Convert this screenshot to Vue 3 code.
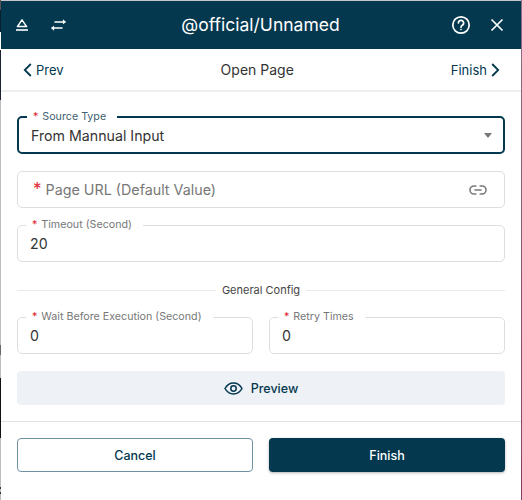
<template>
  <div class="frame">
    <div class="edge-left"></div>
    <div class="panel">
      <header class="topbar">
        <div class="topbar-side">
          <svg class="icon-eject" width="14" height="14" viewBox="0 0 14 14" fill="none" stroke="#fff">
            <path d="M7 1.800 11.600 8.600H2.400Z" stroke-width="1.500" stroke-linejoin="round" />
            <path d="M1 12H13" stroke-width="1.600" />
          </svg>
          <svg class="icon-swap" width="17" height="14" viewBox="0 0 18 14" fill="#fff">
            <path d="M5 4.200h9V2l3.400 2.900L14 7.400V5.600H5z" transform="translate(-.3 -1.100)" />
            <path d="M13 9.800H4V12L.6 9.100 4 6.600v1.800h9z" transform="translate(.3 1.100)" />
          </svg>
        </div>
        <h1 class="title">@official/Unnamed</h1>
        <div class="topbar-side right">
          <svg width="20" height="20" viewBox="0 0 20 20" fill="none" stroke="#fff" stroke-width="1.700">
            <circle cx="10" cy="10" r="8.200" />
            <path d="M7.400 8a2.600 2.600 0 1 1 3.900 2.200c-.9.500-1.300 1-1.300 2" stroke-linecap="round" />
            <circle cx="10" cy="14.500" r=".6" fill="#fff" stroke-width=".6" />
          </svg>
          <svg width="14" height="14" viewBox="0 0 14 14" stroke="#fff" stroke-width="1.700">
            <path d="M1.500 1.500 12.500 12.500M12.500 1.500 1.500 12.500" />
          </svg>
        </div>
      </header>

      <nav class="stepbar">
        <a class="step">
          <svg width="10" height="14" viewBox="0 0 10 14" fill="none" stroke="#03384f" stroke-width="1.800">
            <path d="M7.800 1 1.800 7l6 6" />
          </svg>
          Prev
        </a>
        <span class="step-title">Open Page</span>
        <a class="step">
          Finish
          <svg width="10" height="14" viewBox="0 0 10 14" fill="none" stroke="#03384f" stroke-width="1.800">
            <path d="M2.200 1l6 6-6 6" />
          </svg>
        </a>
      </nav>

      <main class="form">
        <fieldset class="field active">
          <legend><i>*</i>Source Type</legend>
          <div class="value">
            <span>From Mannual Input</span>
            <span class="caret"></span>
          </div>
        </fieldset>

        <div class="field empty">
          <span class="placeholder"><i>*</i>Page URL (Default Value)</span>
          <svg width="18" height="10" viewBox="0 0 18 10" fill="none" stroke="#7a7a7a" stroke-width="1.600">
            <path d="M7.400 1H5a4 4 0 0 0 0 8h2.400M10.600 1H13a4 4 0 0 1 0 8h-2.400M5.400 5h7.200" />
          </svg>
        </div>

        <fieldset class="field">
          <legend><i>*</i>Timeout (Second)</legend>
          <div class="value">20</div>
        </fieldset>

        <div class="divider"><span>General Config</span></div>

        <div class="row">
          <fieldset class="field">
            <legend><i>*</i>Wait Before Execution (Second)</legend>
            <div class="value">0</div>
          </fieldset>
          <fieldset class="field">
            <legend><i>*</i>Retry Times</legend>
            <div class="value">0</div>
          </fieldset>
        </div>

        <button class="preview">
          <svg width="19" height="13" viewBox="0 0 19 13" fill="none" stroke="#03384f" stroke-width="1.500">
            <path d="M1 6.500C3 2.900 6 1 9.500 1S16 2.900 18 6.500C16 10.100 13 12 9.500 12S3 10.100 1 6.500Z" />
            <circle cx="9.500" cy="6.500" r="2.700" />
          </svg>
          Preview
        </button>
      </main>

      <footer class="actions">
        <button class="btn cancel">Cancel</button>
        <button class="btn finish">Finish</button>
      </footer>
    </div>
    <div class="edge-right"></div>
  </div>
</template>

<script setup>
</script>

<style scoped>
.frame {
  display: flex;
  width: 522px;
  height: 500px;
  overflow: hidden;
  background: #fff;
  font-family: Inter, "Liberation Sans", sans-serif;
}

/* bits of the window behind the panel, left in the capture */
.edge-left {
  flex: 0 0 1px;
  background: linear-gradient(
    #555 0 10px,
    #06202d 10px 32px,
    #fff 32px 50px,
    #1c2230 50px 100px,
    #bdbdbd 100px 345px,
    #666 345px 355px,
    #bdbdbd 355px 378px,
    #111 378px 438px,
    #bdbdbd 438px 487px,
    #333 487px 489px,
    #bdbdbd 489px 492px,
    #333 492px 494px,
    #bdbdbd 494px
  );
}

.edge-right {
  flex: 0 0 1px;
  background: linear-gradient(#8e6c88, #8b3f66);
}

.panel {
  flex: 1;
  min-width: 0;
  display: flex;
  flex-direction: column;
  border-top: 1px solid #c9c6cc;
}

.topbar {
  height: 48px;
  flex: none;
  box-sizing: border-box;
  padding: 0 17px 0 14px;
  display: flex;
  align-items: center;
  justify-content: space-between;
  background: #03384f;
  color: #fff;
}

.topbar-side {
  display: flex;
  align-items: center;
  gap: 21px;
  width: 76px;
}

.topbar-side.right {
  justify-content: flex-end;
  gap: 19px;
}

.title {
  margin: 0 0 0 2px;
  font-size: 17.500px;
  font-weight: 400;
  line-height: 24px;
}

.stepbar {
  height: 41px;
  flex: none;
  padding: 0 21px 0 22px;
  display: flex;
  align-items: center;
  justify-content: space-between;
  border-bottom: 2px solid #eeeeee;
}

.step {
  display: flex;
  align-items: center;
  gap: 3px;
  font-size: 13px;
  color: #03384f;
}

.step-title {
  font-size: 14px;
  color: #333;
}

.form {
  padding: 18px 16px 0;
  display: flex;
  flex-direction: column;
}

.field {
  margin: 0 0 17px;
  padding: 0 12px;
  min-width: 0;
  height: 44px;
  box-sizing: border-box;
  border: 1.500px solid #dedede;
  border-radius: 5px;
}

.field legend {
  padding: 0 11px 0 6px;
  margin-left: -4px;
  font-size: 10.700px;
  line-height: 14px;
  color: #777;
  white-space: nowrap;
}

.field i {
  font-style: normal;
  color: #e0242f;
  margin-right: 4px;
}

.field.active {
  border: 2px solid #03384f;
}

.field.active legend {
  color: #3f5f72;
}

.value {
  display: flex;
  align-items: center;
  justify-content: space-between;
  height: 22px;
  font-size: 14.200px;
  color: #333;
}

.caret {
  margin-right: -1px;
  border: 4.500px solid transparent;
  border-top: 5px solid #777;
  border-bottom: 0;
}

.field.empty {
  height: 37px;
  display: flex;
  align-items: center;
  justify-content: space-between;
  padding: 0 17px 0 15px;
  margin-bottom: 10px;
}

.placeholder {
  font-size: 14.300px;
  color: #777;
}

.placeholder i {
  font-size: 17px;
  line-height: 14px;
  margin-right: 4px;
}

.divider {
  margin: 4px 0 13px;
  display: flex;
  align-items: center;
  gap: 6px;
  font-size: 11px;
  color: #444;
}

.divider::before,
.divider::after {
  content: "";
  flex: 1;
  height: 1px;
  background: #e9e9e9;
}

.divider span {
  line-height: 14px;
}

.row {
  display: grid;
  grid-template-columns: 1fr 1fr;
  gap: 16px;
}

.preview {
  height: 34px;
  display: flex;
  align-items: center;
  justify-content: center;
  gap: 8px;
  border: 0;
  border-radius: 4px;
  background: #eef1f5;
  color: #03384f;
  font: 500 12.500px Inter, "Liberation Sans", sans-serif;
}

.actions {
  margin-top: 16px;
  padding: 16px 16px 0;
  display: grid;
  grid-template-columns: 1fr 1fr;
  gap: 16px;
  border-top: 1px solid #e1e1e1;
}

.btn {
  height: 34px;
  border-radius: 4px;
  font: 500 12.500px Inter, "Liberation Sans", sans-serif;
}

.cancel {
  background: #fff;
  color: #03384f;
  border: 1px solid #6f93a5;
}

.finish {
  border: 0;
  background: #03384f;
  color: #fff;
  box-shadow: 0 1px 3px rgba(0, 0, 0, 0.3);
}
</style>
